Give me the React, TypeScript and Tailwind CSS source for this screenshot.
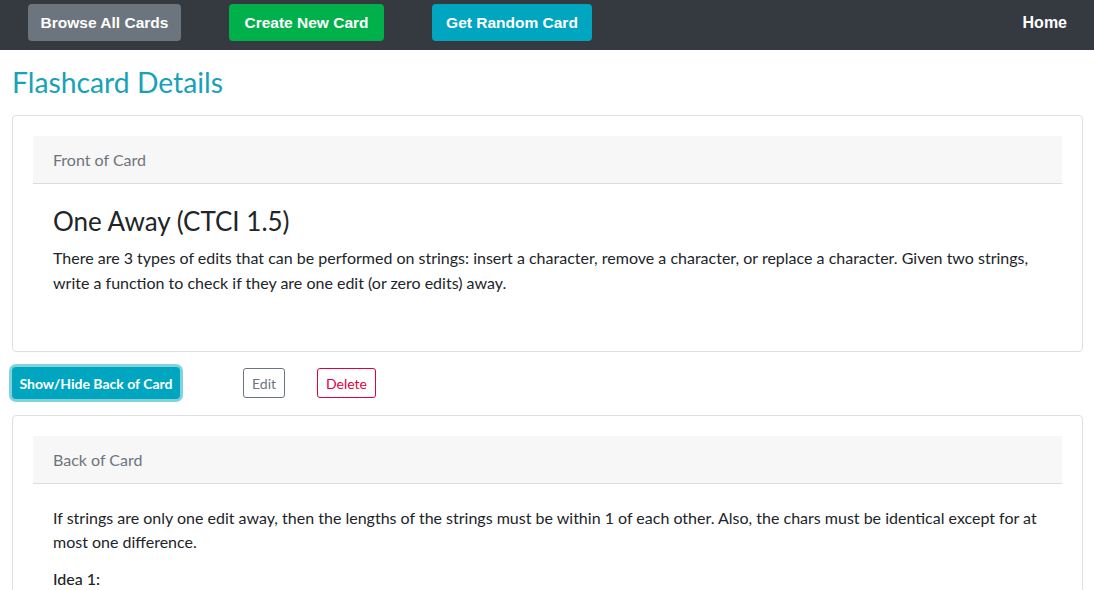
const navBtn =
  "h-[37px] rounded-[4px] text-[15.5px] font-bold text-white font-['Liberation_Sans',Arial,sans-serif]";

const CardHeader = ({ title }: { title: string }) => (
  <div className="flex h-[48px] items-center border-b border-[#dcdcdc] bg-[#f7f7f7] px-[20px]">
    <span className="pt-[1px] text-[16px] text-[#6c757d]">{title}</span>
  </div>
);

export default function App() {
  return (
    <div className="min-h-screen bg-white font-['Lato',sans-serif] text-[#212529]">
      {/* Top navigation */}
      <nav className="flex h-[50px] items-start bg-[#343a40] pt-[4px] pl-[28px] pr-[27px]">
        <div className="flex gap-[48px]">
          <button className={`${navBtn} w-[153px] bg-[#6c757d]`}>Browse All Cards</button>
          <button className={`${navBtn} w-[155px] bg-[#00b04b]`}>Create New Card</button>
          <button className={`${navBtn} w-[160px] bg-[#00a6bf]`}>Get Random Card</button>
        </div>
        <span className="ml-auto mt-[7px] text-[16px] font-bold leading-[24px] text-white font-['Liberation_Sans',Arial,sans-serif]">
          Home
        </span>
      </nav>

      <main className="pl-[12px] pr-[11px]">
        <h1 className="mt-[15px] text-[28.3px] leading-[34px] text-[#17a2b8]">
          Flashcard Details
        </h1>

        {/* Front of card */}
        <section className="mt-[16px] rounded-[4px] border border-[#dfdfdf] p-[20px]">
          <CardHeader title="Front of Card" />
          <div className="px-[20px] pt-[20px] pb-[36px]">
            <h2 className="text-[26px] leading-[34px]">One Away (CTCI 1.5)</h2>
            <p className="mt-[7px] text-[16px] leading-[25px]">
              There are 3 types of edits that can be performed on strings: insert a character,
              remove a character, or replace a character. Given two strings, write a function to
              check if they are one edit (or zero edits) away.
            </p>
          </div>
        </section>

        {/* Actions */}
        <div className="mt-[15px] flex items-center">
          <button className="h-[32px] w-[168px] rounded-[4px] bg-[#00a6bf] text-[14px] font-bold text-white ring-[3px] ring-[#7fd2de]">
            Show/Hide Back of Card
          </button>
          <button className="ml-[63px] h-[30px] rounded-[3px] border border-[#6c757d] px-[8px] text-[14px] text-[#6c757d]">
            Edit
          </button>
          <button className="ml-[32px] h-[30px] rounded-[3px] border border-[#e0003a] px-[8px] text-[14px] text-[#e0003a]">
            Delete
          </button>
        </div>

        {/* Back of card */}
        <section className="mt-[16px] rounded-[4px] border border-[#dfdfdf] p-[20px]">
          <CardHeader title="Back of Card" />
          <div className="px-[20px] pt-[22px]">
            <p className="text-[16px] leading-[24px]">
              If strings are only one edit away, then the lengths of the strings must be within 1 of
              each other. Also, the chars must be identical except for at most one difference.
            </p>
            <p className="mt-[13px] text-[16px] font-medium leading-[24px]">Idea 1:</p>
          </div>
        </section>
      </main>
    </div>
  );
}
